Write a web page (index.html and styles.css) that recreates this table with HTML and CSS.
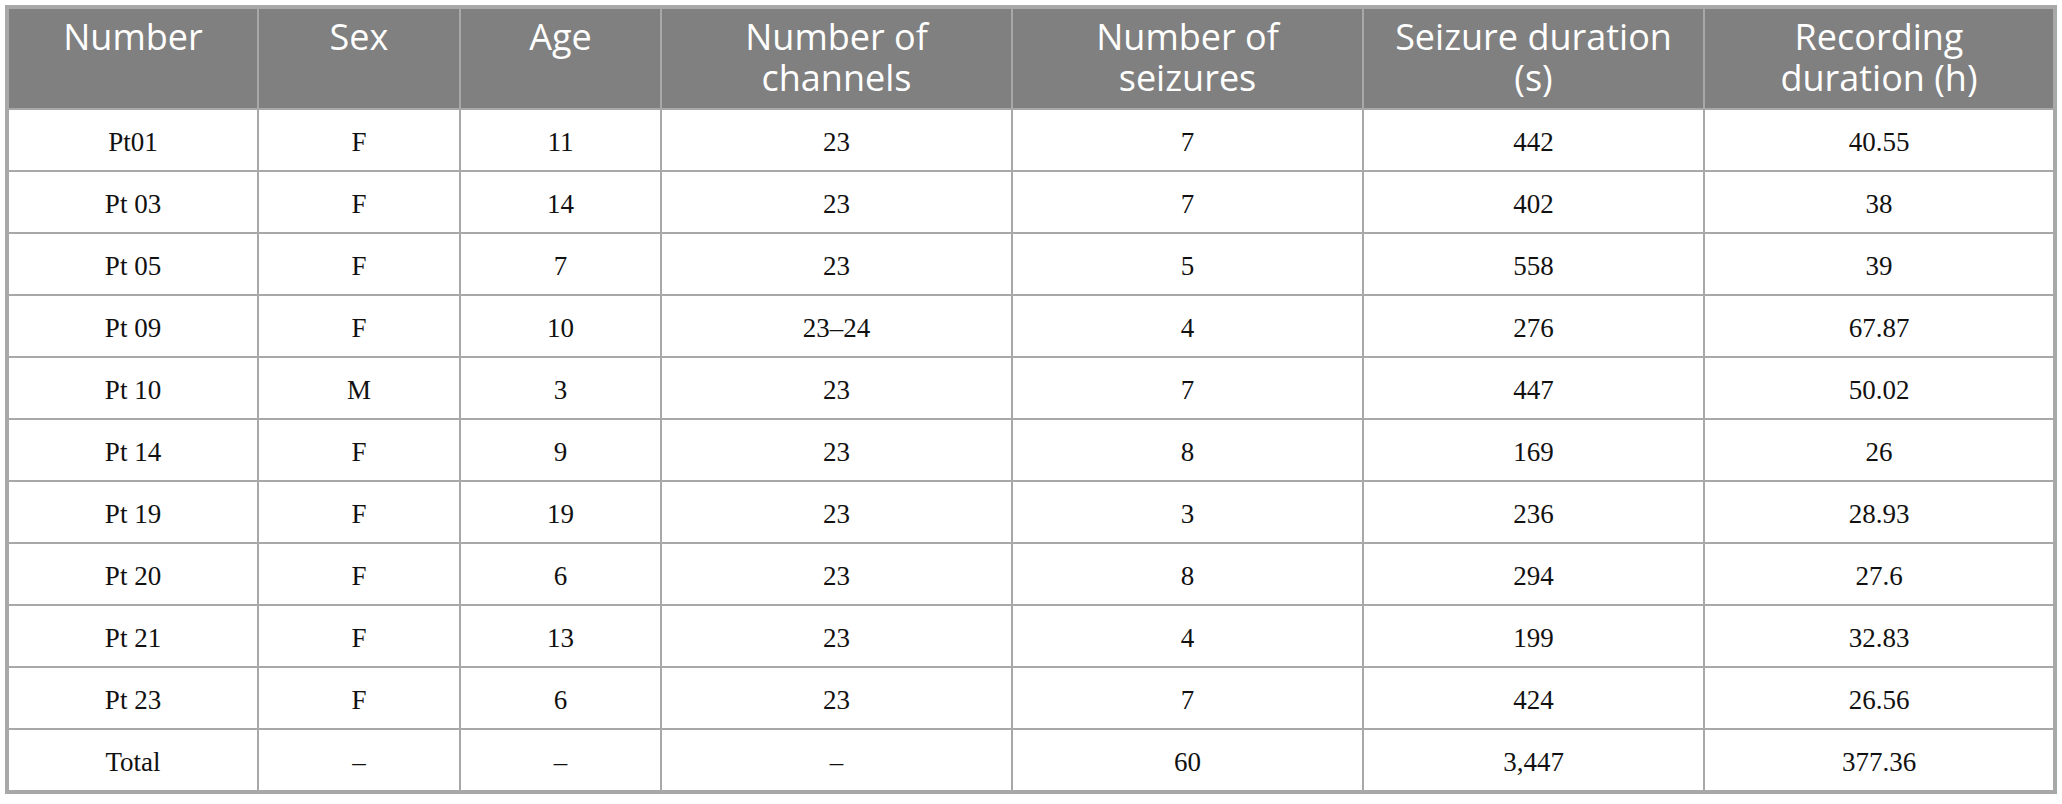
FILE: index.html
```html
<!DOCTYPE html>
<html>
<head>
<meta charset="utf-8">
<link rel="stylesheet" href="styles.css">
</head>
<body>
<table class="data">
  <colgroup>
    <col class="c1"><col class="c2"><col class="c3"><col class="c4"><col class="c5"><col class="c6"><col class="c7">
  </colgroup>
  <thead>
    <tr>
      <th><span class="ln">Number</span></th>
      <th><span class="ln">Sex</span></th>
      <th><span class="ln">Age</span></th>
      <th><span class="ln">Number of</span><span class="ln">channels</span></th>
      <th><span class="ln">Number of</span><span class="ln">seizures</span></th>
      <th><span class="ln">Seizure duration</span><span class="ln">(s)</span></th>
      <th><span class="ln">Recording</span><span class="ln">duration (h)</span></th>
    </tr>
  </thead>
  <tbody>
    <tr><td>Pt01</td><td>F</td><td>11</td><td>23</td><td>7</td><td>442</td><td>40.55</td></tr>
    <tr><td>Pt 03</td><td>F</td><td>14</td><td>23</td><td>7</td><td>402</td><td>38</td></tr>
    <tr><td>Pt 05</td><td>F</td><td>7</td><td>23</td><td>5</td><td>558</td><td>39</td></tr>
    <tr><td>Pt 09</td><td>F</td><td>10</td><td>23–24</td><td>4</td><td>276</td><td>67.87</td></tr>
    <tr><td>Pt 10</td><td>M</td><td>3</td><td>23</td><td>7</td><td>447</td><td>50.02</td></tr>
    <tr><td>Pt 14</td><td>F</td><td>9</td><td>23</td><td>8</td><td>169</td><td>26</td></tr>
    <tr><td>Pt 19</td><td>F</td><td>19</td><td>23</td><td>3</td><td>236</td><td>28.93</td></tr>
    <tr><td>Pt 20</td><td>F</td><td>6</td><td>23</td><td>8</td><td>294</td><td>27.6</td></tr>
    <tr><td>Pt 21</td><td>F</td><td>13</td><td>23</td><td>4</td><td>199</td><td>32.83</td></tr>
    <tr><td>Pt 23</td><td>F</td><td>6</td><td>23</td><td>7</td><td>424</td><td>26.56</td></tr>
    <tr><td>Total</td><td>–</td><td>–</td><td>–</td><td>60</td><td>3,447</td><td>377.36</td></tr>
  </tbody>
</table>
</body>
</html>
```
FILE: styles.css
```css
html, body {
  margin: 0;
  padding: 0;
  background: #ffffff;
}
body {
  padding: 5px 6px 0 5px;
}
.data {
  border-collapse: collapse;
  table-layout: fixed;
  width: 2051px;
  border: 4px solid #a8a8a8;
}
.c1 { width: 251px; }
.c2 { width: 202px; }
.c3 { width: 201px; }
.c4 { width: 351px; }
.c5 { width: 351px; }
.c6 { width: 341px; }
.c7 { width: 351px; }
.data th {
  background: #808080;
  color: #ffffff;
  font-family: "Open Sans", "Liberation Sans", sans-serif;
  font-weight: 400;
  font-size: 36px;
  line-height: 41px;
  height: 102px;
  box-sizing: border-box;
  padding: 7px 6px 10px;
  vertical-align: top;
  text-align: center;
  border: 2px solid #a8a8a8;
}
.data th .ln {
  display: block;
  height: 41px;
  white-space: nowrap;
}
.data td {
  font-family: "Liberation Serif", "Times New Roman", serif;
  font-size: 27px;
  color: #111111;
  text-align: center;
  vertical-align: middle;
  height: 56px;
  padding: 4px 6px 0;
  border: 2px solid #a8a8a8;
}
```
